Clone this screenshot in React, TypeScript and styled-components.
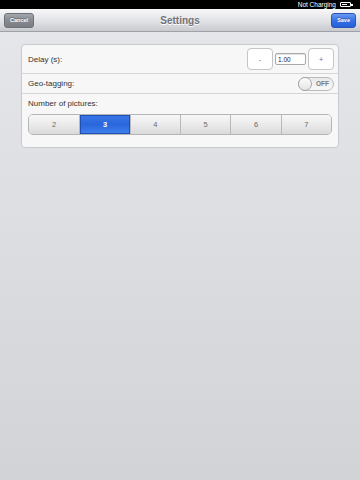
import React from "react";
import styled, { createGlobalStyle } from "styled-components";

const Global = createGlobalStyle`
  html, body { margin: 0; padding: 0; }
  body {
    width: 360px; height: 480px; overflow: hidden;
    font-family: "Liberation Sans", Arial, sans-serif;
  }
  #root { height: 100%; }
`;

const Screen = styled.div`
  width: 360px; height: 480px;
  display: flex; flex-direction: column;
  background: linear-gradient(180deg, #e6e7ea 0%, #dcdde1 50%, #d2d3d7 100%);
`;

const StatusBar = styled.div`
  height: 9px; background: #000; color: #fff;
  display: flex; align-items: center; justify-content: flex-end;
  gap: 4px; padding-right: 9px;
  font-size: 6.5px; line-height: 9px;
`;

const Battery = styled.div`
  width: 11px; height: 5px; border: 1px solid #fff; border-radius: 1px;
  position: relative; box-sizing: border-box; padding: 1px;
  &::after { content: ""; position: absolute; right: -2.5px; top: 1px; width: 1.5px; height: 2px; background: #fff; }
`;
const BatteryFill = styled.div` width: 5px; height: 100%; background: #fff; `;

const NavBar = styled.div`
  height: 23px; box-sizing: border-box;
  display: grid; grid-template-columns: 1fr auto 1fr; align-items: center;
  padding: 0 4px;
  background: linear-gradient(180deg, #f8f8f9 0%, #e3e4e7 50%, #c9cacf 100%);
  border-bottom: 1px solid #9fa1a7;
`;

const NavTitle = styled.div`
  font-size: 10px; font-weight: bold; color: #6f727a;
  text-shadow: 0 1px 0 #fff;
`;

const NavButton = styled.div<{ $primary?: boolean }>`
  justify-self: ${(p) => (p.$primary ? "end" : "start")};
  height: 15px; box-sizing: border-box; padding: 0 5px;
  display: flex; align-items: center;
  font-size: 5.5px; font-weight: bold; color: #fff;
  border-radius: 3px;
  border: 1px solid ${(p) => (p.$primary ? "#2a55b8" : "#6e7178")};
  background: ${(p) =>
    p.$primary
      ? "linear-gradient(180deg, #6a9bf0 0%, #3672e4 50%, #2560d8 100%)"
      : "linear-gradient(180deg, #a3a6ac 0%, #878a91 50%, #7a7d84 100%)"};
  text-shadow: 0 -1px 0 rgba(0,0,0,0.3);
`;

const Content = styled.div`
  padding: 12px 21px 0 21px;
`;

const Card = styled.div`
  background: #f7f7f7; border: 1px solid #c9cacd; border-radius: 4px;
  display: flex; flex-direction: column;
`;

const Row = styled.div<{ $h: number }>`
  height: ${(p) => p.$h}px; box-sizing: border-box;
  display: flex; align-items: center; justify-content: space-between;
  padding: 0 4px 0 6px;
  border-bottom: 1px solid #d6d6d8;
`;

const Label = styled.div`
  font-size: 8px; line-height: 9px; color: #333;
`;

const Stepper = styled.div`
  display: flex; align-items: center; gap: 2px;
`;

const StepButton = styled.div`
  width: 26px; height: 22px; box-sizing: border-box;
  border: 1px solid #c4c5c8; border-radius: 4px; background: #fff;
  display: flex; align-items: center; justify-content: center;
  font-size: 7px; color: #4a6bb0;
`;

const StepInput = styled.div`
  width: 31px; height: 12px; box-sizing: border-box;
  border: 1px solid #a9aaad; border-radius: 2px; background: #fff;
  font-size: 6.5px; color: #222; padding-left: 2px;
  display: flex; align-items: center;
  box-shadow: inset 0 1px 1px rgba(0,0,0,0.12);
`;

const Toggle = styled.div`
  width: 36px; height: 14px; box-sizing: border-box;
  border: 1px solid #b9babd; border-radius: 7px;
  background: linear-gradient(180deg, #e8e8e8, #f8f8f8);
  display: flex; align-items: center; justify-content: space-between;
  padding-right: 4px;
`;

const Knob = styled.div`
  width: 14px; height: 14px; margin-left: -1px; box-sizing: border-box;
  border-radius: 50%; border: 1px solid #a6a7aa;
  background: linear-gradient(180deg, #fdfdfd, #e4e4e4);
`;

const ToggleText = styled.div`
  font-size: 6.5px; font-weight: bold; color: #7a7a7a;
`;

const PicturesRow = styled.div`
  padding: 5px 6px 12px 6px;
  display: flex; flex-direction: column; gap: 6px;
`;

const Segmented = styled.div`
  display: grid; grid-template-columns: repeat(6, 1fr);
  height: 21px; box-sizing: border-box;
  border: 1px solid #b4b5b8; border-radius: 5px; overflow: hidden;
`;

const Segment = styled.div<{ $on?: boolean; $first?: boolean }>`
  display: flex; align-items: center; justify-content: center;
  font-size: 7.5px;
  color: ${(p) => (p.$on ? "#fff" : "#6a6a6a")};
  font-weight: ${(p) => (p.$on ? "bold" : "normal")};
  border-left: ${(p) => (p.$first ? "none" : "1px solid #b8b9bc")};
  background: ${(p) =>
    p.$on
      ? "linear-gradient(180deg, #3a78e8 0%, #2a66dc 50%, #3f82ee 100%)"
      : "linear-gradient(180deg, #f7f7f7 0%, #ebebeb 50%, #d9d9da 100%)"};
  box-shadow: ${(p) => (p.$on ? "inset 0 0 0 1px #1f4fb4" : "none")};
`;

export default function App() {
  const values = [2, 3, 4, 5, 6, 7];
  return (
    <Screen>
      <Global />
      <StatusBar>
        <span>Not Charging</span>
        <Battery><BatteryFill /></Battery>
      </StatusBar>
      <NavBar>
        <NavButton>Cancel</NavButton>
        <NavTitle>Settings</NavTitle>
        <NavButton $primary>Save</NavButton>
      </NavBar>
      <Content>
        <Card>
          <Row $h={29}>
            <Label>Delay (s):</Label>
            <Stepper>
              <StepButton>-</StepButton>
              <StepInput>1.00</StepInput>
              <StepButton>+</StepButton>
            </Stepper>
          </Row>
          <Row $h={20}>
            <Label>Geo-tagging:</Label>
            <Toggle>
              <Knob />
              <ToggleText>OFF</ToggleText>
            </Toggle>
          </Row>
          <PicturesRow>
            <Label>Number of pictures:</Label>
            <Segmented>
              {values.map((v, i) => (
                <Segment key={v} $on={v === 3} $first={i === 0}>{v}</Segment>
              ))}
            </Segmented>
          </PicturesRow>
        </Card>
      </Content>
    </Screen>
  );
}
